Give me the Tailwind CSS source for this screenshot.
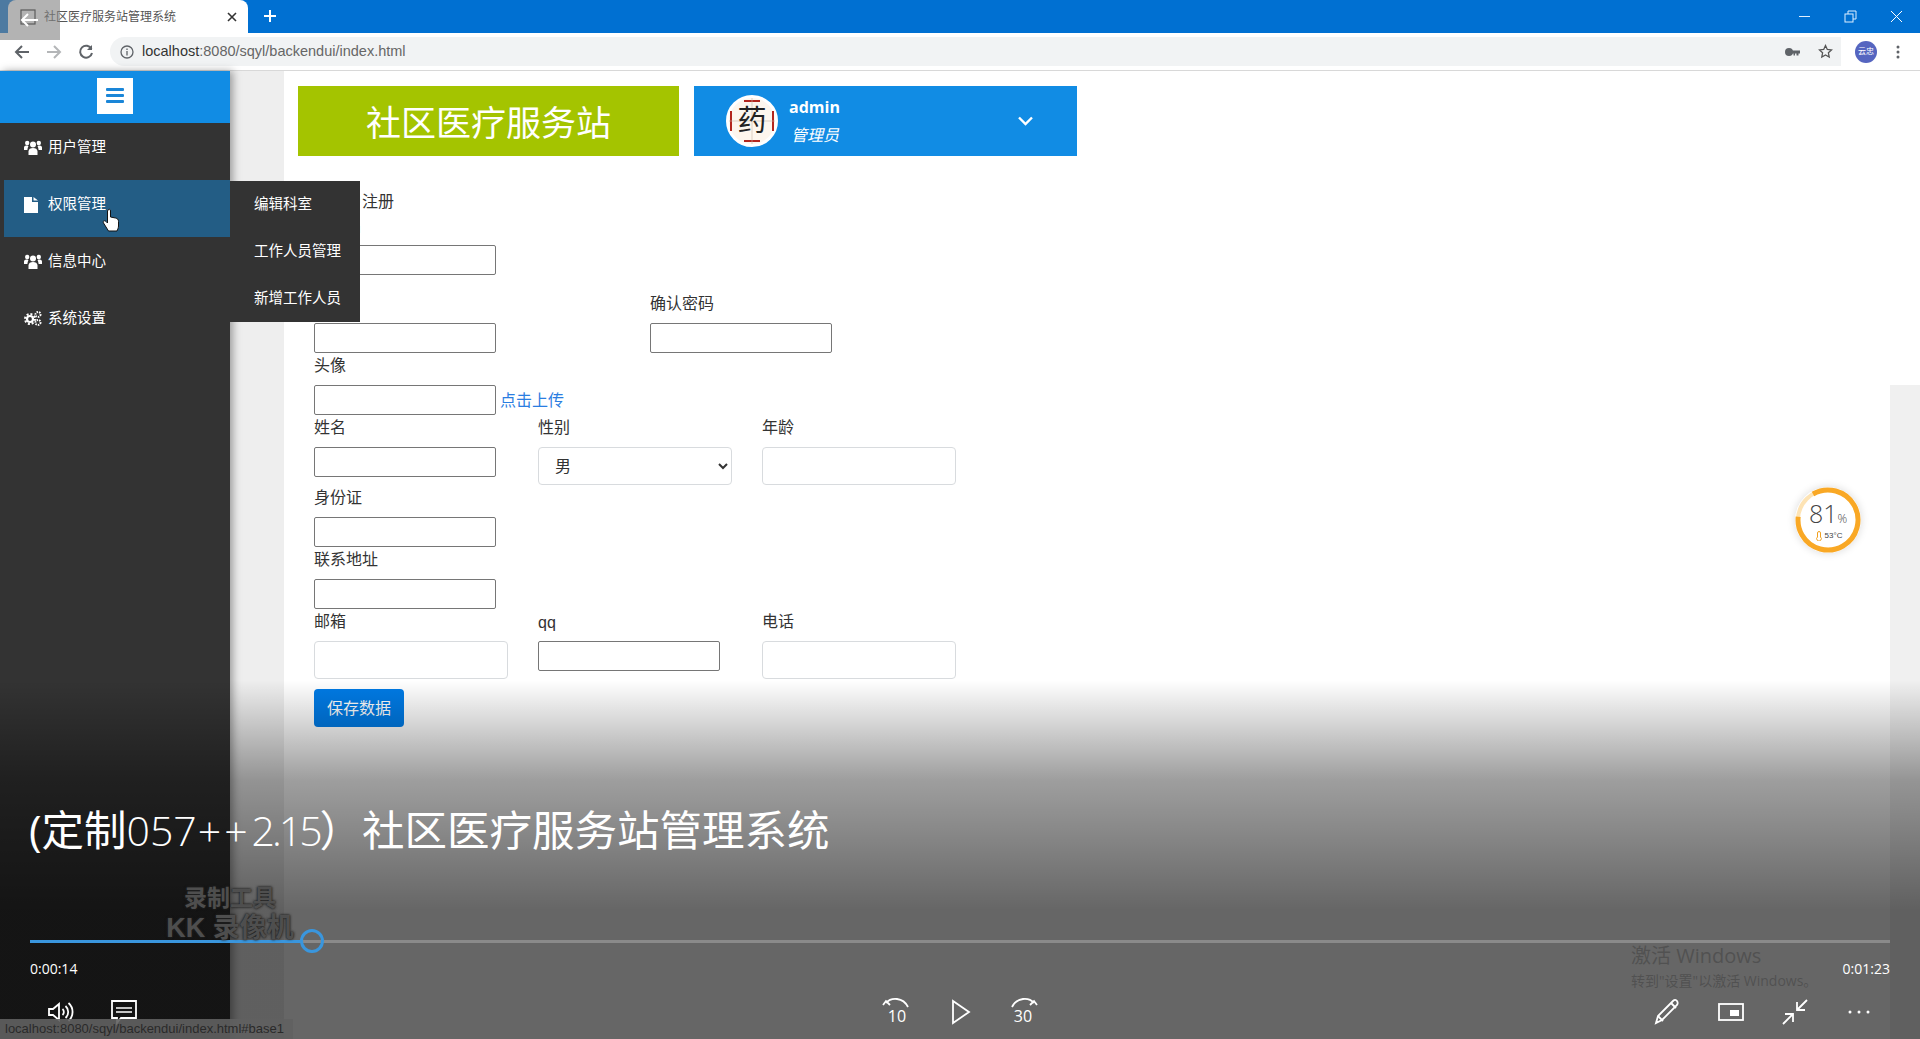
<!DOCTYPE html>
<html lang="zh-CN">
<head>
  <meta charset="UTF-8">
  <title>社区医疗服务站管理系统</title>
  <script src="https://cdn.jsdelivr.net/npm/@tailwindcss/browser@4"></script>
</head>
<body class="relative w-[1920px] h-[1039px] overflow-hidden flex flex-col bg-white text-[#333] font-['Liberation_Sans','Noto_Sans_CJK_SC',sans-serif]">

  <!-- browser tab strip -->
  <div class="h-[33px] shrink-0 bg-[#0070d2] flex items-end pl-2">
    <div class="w-[240px] h-[33px] bg-white rounded-t-lg flex items-center pl-3 pr-[10px] text-[12px] text-[#555]">
      <svg class="w-4 h-4 shrink-0" viewBox="0 0 16 16" fill="none" stroke="#222" stroke-width="1.2"><rect x="1" y="1" width="14" height="14"/></svg>
      <span class="ml-2 flex-1 whitespace-nowrap">社区医疗服务站管理系统</span>
      <svg class="w-3 h-3" viewBox="0 0 12 12" stroke="#333" stroke-width="1.6"><path d="M2 2l8 8M10 2l-8 8"/></svg>
    </div>
    <svg class="w-3.5 h-3.5 ml-[15px] mb-2.5" viewBox="0 0 14 14" stroke="#fff" stroke-width="2"><path d="M7 1v12M1 7h12"/></svg>
    <div class="ml-auto flex items-center h-[33px] gap-[31px] pr-4 self-start">
      <svg class="w-[15px] h-[15px]" viewBox="0 0 15 15" stroke="#dfefff" stroke-width="1"><path d="M2 7.5h11"/></svg>
      <svg class="w-[15px] h-[15px]" viewBox="0 0 15 15" fill="none" stroke="#dfefff" stroke-width="1"><rect x="2" y="5" width="8" height="8"/><path d="M5 5V2h8v8h-3"/></svg>
      <svg class="w-[15px] h-[15px]" viewBox="0 0 15 15" stroke="#fff" stroke-width="1"><path d="M2 2l11 11M13 2L2 13"/></svg>
    </div>
  </div>

  <!-- browser toolbar -->
  <div class="h-[38px] shrink-0 bg-white border-b border-[#d8d8d8] flex items-center pl-[14px] pr-[14px]">
    <svg class="w-4 h-4" viewBox="0 0 16 16" fill="none" stroke="#5f6368" stroke-width="2"><path d="M15 8H2M8 2L2 8l6 6"/></svg>
    <svg class="w-4 h-4 ml-4" viewBox="0 0 16 16" fill="none" stroke="#b4b6b8" stroke-width="2"><path d="M1 8h13M8 2l6 6-6 6"/></svg>
    <svg class="w-4 h-4 ml-4" viewBox="0 0 16 16" fill="none" stroke="#5f6368" stroke-width="2"><path d="M13.5 5A6 6 0 1 0 14 9"/><path d="M14 1v5H9" fill="#5f6368" stroke="none"/></svg>
    <div class="ml-[16px] w-[1731px] h-[29px] bg-[#f1f3f4] rounded-l-full flex items-center pl-[10px] pr-[8px] shrink-0">
      <svg class="w-[14px] h-[14px] shrink-0" viewBox="0 0 14 14" fill="none" stroke="#5f6368" stroke-width="1.3"><circle cx="7" cy="7" r="6"/><path d="M7 6v4.500M7 3.500v1.500"/></svg>
      <span class="ml-[8px] text-[14.5px] text-[#666]"><span class="text-[#333]">localhost</span>:8080/sqyl/backendui/index.html</span>
      <svg class="w-[15px] h-[10px] ml-auto" viewBox="0 0 15 10" fill="#5f6368"><circle cx="4" cy="5" r="4"/><path d="M6 3.500h9v3h-1.500v2h-2v-2h-1.500v2h-1.500v-2H6z"/></svg>
      <svg class="w-[15px] h-[15px] ml-[18px]" viewBox="0 0 15 15" fill="none" stroke="#555" stroke-width="1.300"><path d="M7.500 1.500l1.800 3.900 4.200.5-3.100 2.900.8 4.200-3.700-2.100-3.700 2.100.8-4.200L1.500 5.900l4.200-.5z"/></svg>
    </div>
    <div class="ml-[14px] w-[22px] h-[22px] rounded-full bg-[#5565c0] text-white text-[8px] flex items-center justify-center shrink-0">云忠</div>
    <svg class="w-[4px] h-[14px] ml-[19px] shrink-0" viewBox="0 0 4 14" fill="#5f6368"><circle cx="2" cy="2" r="1.500"/><circle cx="2" cy="7" r="1.500"/><circle cx="2" cy="12" r="1.500"/></svg>
  </div>

  <div class="flex-1 flex min-h-0">
    <!-- side menu -->
    <aside class="relative z-10 w-[230px] shrink-0 bg-[#333] text-white text-[14.5px] shadow-[3px_0_8px_rgba(0,0,0,0.35)]">
      <div class="h-[52px] bg-[#118ce4] flex items-center justify-center pb-[3px]">
        <button class="w-[36px] h-[36px] bg-white flex items-center justify-center">
          <svg class="w-[18px] h-[15px]" viewBox="0 0 18 15" fill="#1a86d8"><rect width="18" height="3" rx="1"/><rect y="6" width="18" height="3" rx="1"/><rect y="12" width="18" height="3" rx="1"/></svg>
        </button>
      </div>
      <a class="h-[57px] flex items-center pl-6 pb-[8px]">
        <svg class="w-[18px] h-[15px] mr-[6px]" viewBox="0 0 18 15" fill="#fff"><circle cx="9" cy="4.500" r="3"/><path d="M4.500 15v-3.500C4.500 9 6.500 8 9 8s4.500 1 4.500 3.500V15z"/><circle cx="3.200" cy="3" r="2.200"/><circle cx="14.800" cy="3" r="2.200"/><path d="M0 10V7.500C0 6 1.500 5.500 3.200 5.500l1.300.5C4 7 3.600 8 3.400 10zM18 10V7.500c0-1.500-1.500-2-3.200-2l-1.300.5c.5 1 .9 2 1.100 4z"/></svg>
        用户管理
      </a>
      <a class="h-[57px] flex items-center pl-5 pb-[8px] ml-1 bg-[#235d85] relative">
        <svg class="w-[14px] h-[16px] mr-[10px]" viewBox="0 0 14 16" fill="#fff"><path d="M0 0h8v5h6v11H0zM9.500 0L14 3.500H9.500z"/></svg>
        权限管理
        <svg class="absolute left-[98px] top-[28px] w-[18px] h-[24px]" viewBox="0 0 18 24" fill="#fff" stroke="#111" stroke-width="1"><path d="M6 2c1-1 2.500-1 2.500 1v6l5 1c2 .5 3 1.500 3 3.500V18c0 2-1 3.500-1.500 5H6.500L1.500 15c-1-2 1-3 2.500-1.500L5.500 15V3z"/></svg>
      </a>
      <a class="h-[57px] flex items-center pl-6 pb-[8px]">
        <svg class="w-[18px] h-[15px] mr-[6px]" viewBox="0 0 18 15" fill="#fff"><circle cx="9" cy="4.500" r="3"/><path d="M4.500 15v-3.500C4.500 9 6.500 8 9 8s4.500 1 4.500 3.500V15z"/><circle cx="3.200" cy="3" r="2.200"/><circle cx="14.800" cy="3" r="2.200"/><path d="M0 10V7.500C0 6 1.500 5.500 3.200 5.500l1.300.5C4 7 3.600 8 3.400 10zM18 10V7.500c0-1.500-1.500-2-3.200-2l-1.300.5c.5 1 .9 2 1.100 4z"/></svg>
        信息中心
      </a>
      <a class="h-[57px] flex items-center pl-6 pb-[8px]">
        <svg class="w-[18px] h-[15px] mr-[6px]" viewBox="0 0 18 15" fill="none" stroke="#fff"><circle cx="6" cy="8" r="3" stroke-width="2.200"/><circle cx="6" cy="8" r="5" stroke-width="2" stroke-dasharray="2 1.900"/><circle cx="14" cy="3.500" r="2.500" stroke-width="2" stroke-dasharray="1.500 1"/><circle cx="14" cy="11.500" r="2.500" stroke-width="2" stroke-dasharray="1.500 1"/></svg>
        系统设置
      </a>

      <!-- hover submenu -->
      <div class="absolute left-[230px] top-[110px] w-[130px] h-[141px] bg-[#333] flex flex-col pl-[24px]">
        <a class="h-[47px] flex items-center">编辑科室</a>
        <a class="h-[47px] flex items-center">工作人员管理</a>
        <a class="h-[47px] flex items-center">新增工作人员</a>
      </div>
    </aside>

    <!-- page content -->
    <main class="flex-1 flex bg-[#eee] pl-[54px]">
      <div class="flex-1 h-full bg-white pl-[30px] text-[16px]">
        <div class="flex pt-[15px] -ml-4 gap-[15px] h-[118px] items-start">
          <div class="w-[381px] h-[70px] bg-[#a4c400] text-white text-[35px] pt-[6px] flex items-center justify-center">社区医疗服务站</div>
          <div class="w-[383px] h-[70px] bg-[#118ce4] text-white flex items-center pl-[32px]">
            <svg class="w-[52px] h-[52px] shrink-0" viewBox="0 0 52 52">
              <circle cx="26" cy="26" r="24.500" fill="#fdf6ee" stroke="#fff" stroke-width="3"/>
              <path d="M5 16v20M47 16v20M18 6h16M18 46h16" stroke="#b3261e" stroke-width="2"/>
              <path d="M3 26h46M26 3v46" stroke="#c9b9a8" stroke-width="0.600"/>
              <text x="26" y="36" font-size="29" text-anchor="middle" fill="#222" font-family="Noto Sans CJK SC">药</text>
            </svg>
            <div class="ml-[11px] flex flex-col">
              <span class="font-bold text-[16px] leading-[24px] font-['Open_Sans','Noto_Sans_CJK_SC',sans-serif]">admin</span>
              <span class="italic text-[16px] leading-[24px] mt-[5px] ml-[2px]">管理员</span>
            </div>
            <svg class="w-[15px] h-[10px] ml-[178px]" viewBox="0 0 15 10" fill="none" stroke="#fff" stroke-width="2.400"><path d="M1 1.500l6.500 6.500L14 1.500"/></svg>
          </div>
        </div>

        <form class="text-[16px] text-[#333]">
          <h2 class="h-6 leading-[26px] pl-4">用户注册</h2>
          <label class="block h-6 mb-2 leading-[26px]">用户名</label>
          <input class="block w-[182px] h-[30px] border border-[#767676] rounded-[2px] bg-white">

          <div class="flex mt-4">
            <div class="w-[336px]">
              <label class="block h-6 mb-2 leading-[26px]">密码</label>
              <input class="block w-[182px] h-[30px] border border-[#767676] rounded-[2px] bg-white">
            </div>
            <div>
              <label class="block h-6 mb-2 leading-[26px]">确认密码</label>
              <input class="block w-[182px] h-[30px] border border-[#767676] rounded-[2px] bg-white">
            </div>
          </div>

          <label class="block h-6 mb-2 leading-[26px]">头像</label>
          <div class="flex items-center">
            <input class="block w-[182px] h-[30px] border border-[#767676] rounded-[2px] bg-white">
            <a class="ml-1 pt-[2px] text-[#2a7de1]">点击上传</a>
          </div>

          <div class="flex">
            <div class="w-[224px]">
              <label class="block h-6 mb-2 leading-[26px]">姓名</label>
              <input class="block w-[182px] h-[30px] border border-[#767676] rounded-[2px] bg-white">
            </div>
            <div class="w-[224px]">
              <label class="block h-6 mb-2 leading-[26px]">性别</label>
              <select class="block w-[194px] h-[38px] border border-[#d8dbde] rounded bg-white pl-3 appearance-auto">
                <option>男</option>
                <option>女</option>
              </select>
            </div>
            <div>
              <label class="block h-6 mb-2 leading-[26px]">年龄</label>
              <input class="block w-[194px] h-[38px] border border-[#d8dbde] rounded bg-white">
            </div>
          </div>

          <label class="block h-6 mb-2 leading-[26px]">身份证</label>
          <input class="block w-[182px] h-[30px] border border-[#767676] rounded-[2px] bg-white">

          <label class="block h-6 mb-2 leading-[26px]">联系地址</label>
          <input class="block w-[182px] h-[30px] border border-[#767676] rounded-[2px] bg-white">

          <div class="flex">
            <div class="w-[224px]">
              <label class="block h-6 mb-2 leading-[26px]">邮箱</label>
              <input class="block w-[194px] h-[38px] border border-[#d8dbde] rounded bg-white">
            </div>
            <div class="w-[224px]">
              <label class="block h-6 mb-2 leading-6 pt-[2px]">qq</label>
              <input class="block w-[182px] h-[30px] border border-[#767676] rounded-[2px] bg-white">
            </div>
            <div>
              <label class="block h-6 mb-2 leading-[26px]">电话</label>
              <input class="block w-[194px] h-[38px] border border-[#d8dbde] rounded bg-white">
            </div>
          </div>

          <button type="button" class="mt-[10px] w-[90px] h-[38px] pt-[2px] rounded bg-[#007be6] text-white text-[16px]">保存数据</button>
        </form>
      </div>
      <div class="w-[30px] flex flex-col">
        <div class="h-[314px] bg-white"></div>
        <div class="flex-1 bg-[#f0f0f0]"></div>
      </div>
    </main>
  </div>

  <!-- cpu temperature widget -->
  <div class="absolute left-[1795px] top-[487px] w-[66px] h-[66px] rounded-full bg-white shadow-[0_0_8px_rgba(0,0,0,0.15)] flex flex-col items-center justify-center text-[#444]">
    <svg class="absolute inset-0 w-[66px] h-[66px]" viewBox="0 0 66 66" fill="none"><circle cx="33" cy="33" r="30" stroke="#fde3b4" stroke-width="4"/><circle cx="33" cy="33" r="30" stroke="#f9a825" stroke-width="5" stroke-dasharray="160 29" transform="rotate(-120 33 33)"/></svg>
    <div class="text-[25px] leading-[25px] mt-[2px] font-['Open_Sans',sans-serif] font-light">81<span class="text-[12px]">%</span></div>
    <div class="flex items-center gap-[3px] text-[8px] leading-[10px] ml-[2px]">
      <svg class="w-[6px] h-[10px]" viewBox="0 0 6 10" fill="none" stroke="#f0a020"><path d="M1.500 6V2a1.500 1.500 0 0 1 3 0v4a2.300 2.300 0 1 1-3 0z"/></svg>
      53°C
    </div>
  </div>

  <!-- video player overlay -->
  <div class="absolute inset-x-0 bottom-0 h-[359px] z-20 text-white bg-[linear-gradient(to_bottom,rgba(0,0,0,0)_0px,rgba(0,0,0,0.38)_100px,rgba(0,0,0,0.6)_230px)] font-['Open_Sans','Noto_Sans_CJK_SC',sans-serif]">
    <h1 class="pt-[120px] pl-[29px] h-[180px] text-[42.5px] leading-[60px] font-normal whitespace-nowrap">(定制<span class="font-light text-[41px]">057<span class="mx-[1px] tracking-[3px]">++</span><span class="tracking-[-3px]">2.15</span></span>）社区医疗服务站管理系统</h1>

    <div class="relative mt-[69px] mx-[30px] h-6 flex items-center">
      <div class="w-[270px] h-[3px] bg-[#3a96dd]"></div>
      <div class="flex-1 h-[3px] bg-[#8a8a8a]"></div>
      <div class="absolute left-[270px] top-0 w-6 h-6 rounded-full border-[3px] border-[#3a96dd]"></div>
    </div>

    <div class="mt-[5px] mx-[30px] h-5 flex justify-between items-center text-[14px]">
      <span>0:00:14</span>
      <span>0:01:23</span>
    </div>

    <div class="mt-[14px] h-10 grid grid-cols-3 items-center">
      <div class="flex gap-[36px] pl-[46px]">
        <svg class="w-7 h-7" viewBox="0 0 28 28" fill="none" stroke="#fff" stroke-width="1.800"><path d="M3 11v6h4l6 5V6l-6 5z"/><path d="M16.500 11a4 4 0 0 1 0 6M19.500 8a8 8 0 0 1 0 12M22.500 5a12 12 0 0 1 0 18"/></svg>
        <svg class="w-7 h-7" viewBox="0 0 28 28" fill="none" stroke="#fff" stroke-width="1.800"><path d="M2 3h24v17H11l-4 5v-5H2z"/><path d="M6 10h16M6 14h16" stroke-width="1.500"/></svg>
      </div>
      <div class="flex justify-center gap-[31px]">
        <div class="relative w-8 h-8">
          <svg class="absolute inset-0 w-8 h-8" viewBox="0 0 32 32" fill="none" stroke="#fff" stroke-width="1.800"><path d="M5 7C10 1 22 1 27 11"/><path d="M2 10l3-4 4 4" transform="translate(0 -1)"/></svg>
          <span class="absolute inset-x-0 top-[9px] text-center text-[16px] leading-[22px]">10</span>
        </div>
        <svg class="w-8 h-8" viewBox="0 0 32 32" fill="none" stroke="#fff" stroke-width="1.800"><path d="M9 5v22l16-11z"/></svg>
        <div class="relative w-8 h-8">
          <svg class="absolute inset-0 w-8 h-8" viewBox="0 0 32 32" fill="none" stroke="#fff" stroke-width="1.800"><path d="M5 11C10 1 22 1 27 7"/><path d="M23 10l4-4 3 4" transform="translate(0 -1)"/></svg>
          <span class="absolute inset-x-0 top-[9px] text-center text-[16px] leading-[22px]">30</span>
        </div>
      </div>
      <div class="flex justify-end gap-[36px] pr-[47px]">
        <svg class="w-7 h-7" viewBox="0 0 28 28" fill="none" stroke="#fff" stroke-width="1.800"><path d="M3 25l2-7L20 3c1.500-1.500 3-1.500 4 0s1 2.500 0 4L9 22z"/><path d="M5 18l5 5M18 5l5 5"/></svg>
        <svg class="w-7 h-7" viewBox="0 0 28 28" fill="none" stroke="#fff" stroke-width="1.800"><rect x="2" y="6" width="24" height="16"/><rect x="13" y="12" width="9" height="6" fill="#fff" stroke="none"/></svg>
        <svg class="w-7 h-7" viewBox="0 0 28 28" fill="none" stroke="#fff" stroke-width="1.800"><path d="M26 2L16 12M16 4v8h8M2 26l10-10M4 16h8v8"/></svg>
        <svg class="w-7 h-7" viewBox="0 0 28 28" fill="#fff"><circle cx="5" cy="14" r="1.500"/><circle cx="14" cy="14" r="1.500"/><circle cx="23" cy="14" r="1.500"/></svg>
      </div>
    </div>
  </div>

  <!-- stuff on top of the player -->
  <div class="absolute z-30 left-0 top-0 w-[60px] h-[40px] bg-[#808080]/60 flex items-center pl-[20px]">
    <svg class="w-[18px] h-[16px]" viewBox="0 0 18 16" fill="none" stroke="#fff" stroke-width="2"><path d="M18 8H2M8 2L2 8l6 6"/></svg>
  </div>
  <div class="absolute z-30 left-[160px] top-[883px] w-[140px] flex flex-col items-center font-bold text-[#555]/90 [text-shadow:0_0_2px_#222,0_0_3px_#222]">
    <span class="text-[23px] leading-[30px]">录制工具</span>
    <span class="text-[27px] leading-[30px] whitespace-nowrap">KK 录像机</span>
  </div>
  <div class="absolute z-30 left-[1631px] top-[942px] text-[#3c3c3c]/50 font-['Open_Sans','Noto_Sans_CJK_SC',sans-serif]">
    <div class="text-[20px] leading-[28px]">激活 Windows</div>
    <div class="text-[14px] leading-[20px] mt-[1px]">转到"设置"以激活 Windows。</div>
  </div>
  <div class="absolute z-30 left-0 bottom-0 h-[20px] w-[293px] bg-[#606060]/90 flex items-center pl-[5px] text-[13px] text-[#2a2a2a] whitespace-nowrap">localhost:8080/sqyl/backendui/index.html#base1</div>
</body>
</html>
